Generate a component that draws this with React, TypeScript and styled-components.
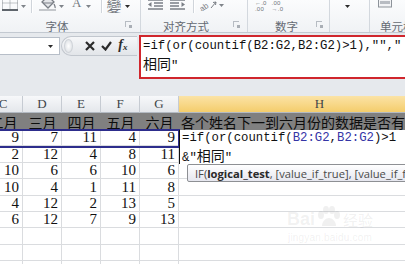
import React from 'react';
import styled, { createGlobalStyle } from 'styled-components';

const GlobalStyle = createGlobalStyle`
  html, body {
    margin: 0;
    padding: 0;
    background: #fff;
  }
  body {
    width: 405px;
    height: 264px;
    overflow: hidden;
  }
`;

const Screen = styled.div`
  position: relative;
  width: 405px;
  height: 264px;
  overflow: hidden;
  display: flex;
  flex-direction: column;
  background: #fff;
  font-family: "Noto Sans CJK SC", sans-serif;
`;

/* ---------- ribbon ---------- */

const Ribbon = styled.div`
  height: 33px;
  flex-shrink: 0;
  display: flex;
  background: linear-gradient(#fbfcfd, #f0f2f5);
  border-bottom: 1px solid #c3c9d1;
  box-sizing: border-box;
`;

const Group = styled.div<{ $w?: number }>`
  position: relative;
  width: ${p => (p.$w ? `${p.$w}px` : 'auto')};
  flex: ${p => (p.$w ? '0 0 auto' : '1')};
  display: flex;
  flex-direction: column;
  border-right: ${p => (p.$w ? '1px solid #d3d8de' : 'none')};
  box-sizing: border-box;
  overflow: hidden;
`;

const Tools = styled.div`
  height: 13px;
  display: flex;
  align-items: flex-end;
  overflow: hidden;
`;

const Tool = styled.span<{ $ml: number; $mb?: number }>`
  display: flex;
  align-items: flex-end;
  flex-shrink: 0;
  margin-left: ${p => p.$ml}px;
  margin-bottom: ${p => p.$mb ?? 0}px;
`;

const ToolSep = styled.span<{ $ml: number }>`
  width: 1px;
  height: 13px;
  flex-shrink: 0;
  margin-left: ${p => p.$ml}px;
  background: #d0d5db;
  box-shadow: 1px 0 0 #fff;
`;

const GlyphIcon = styled.span<{ $size: number; $serif?: boolean }>`
  display: block;
  font-family: ${p => (p.$serif ? '"Liberation Serif", serif' : '"Noto Sans CJK TC", "Noto Sans CJK SC", sans-serif')};
  font-size: ${p => p.$size}px;
  line-height: ${p => p.$size}px;
  color: #767b82;
`;

const TinyStack = styled.span`
  display: flex;
  flex-direction: column;
  font-family: "Liberation Sans", sans-serif;
  font-size: 6px;
  line-height: 6px;
  color: #6f747b;
  letter-spacing: 0.2px;
`;

const GroupLabel = styled.div<{ $shift?: number; $left?: boolean }>`
  height: 19px;
  display: flex;
  align-items: center;
  justify-content: ${p => (p.$left ? 'flex-start' : 'center')};
  padding-top: 7px;
  padding-left: ${p => (p.$left ? 10 : 0)}px;
  box-sizing: border-box;
  transform: translateX(${p => p.$shift ?? 0}px);
  font-size: 11.5px;
  line-height: 12px;
  color: #646a73;
  white-space: nowrap;
`;

const Launcher = styled.span<{ $right: number }>`
  position: absolute;
  right: ${p => p.$right}px;
  bottom: 5px;
  width: 6px;
  height: 6px;
  border-top: 1px solid #b7bcc3;
  border-left: 1px solid #b7bcc3;
  box-sizing: border-box;

  &::after {
    content: '';
    position: absolute;
    right: -1px;
    bottom: -1px;
    width: 3px;
    height: 3px;
    background: #a9aeb5;
  }
`;

const Caret = ({ dark }: { dark?: boolean }) => (
  <svg width="5" height="3" viewBox="0 0 5 3">
    <path d="M0 0h5L2.5 3z" fill={dark ? '#2b2b2b' : '#7f848a'} />
  </svg>
);

const BordersIcon = () => (
  <svg width="16" height="16" viewBox="0 0 16 16">
    <g stroke="#868c93" strokeWidth="1" strokeDasharray="1 1" fill="none">
      <path d="M0.5 0.5V15.5M15.5 0.5V15.5M8 0.5V15.5M0.5 8H15.5" />
    </g>
    <path d="M0 15h16" stroke="#5f656c" strokeWidth="2" />
  </svg>
);

const BucketIcon = () => (
  <svg width="17" height="16" viewBox="0 0 17 16">
    <path d="M3 7l6-6 6 6-6 6z" fill="#e4e6e9" stroke="#7a7f86" strokeWidth="1.3" />
    <path d="M4 8h10" stroke="#7a7f86" strokeWidth="1" />
    <path d="M15 9c1 2 1.5 3 1 4" stroke="#7a7f86" strokeWidth="1.3" fill="none" />
    <rect x="0" y="14" width="17" height="2" fill="#c4c7cb" />
  </svg>
);

const IndentIcon = ({ flip }: { flip?: boolean }) => (
  <svg width="15" height="11" viewBox="0 0 15 11" style={flip ? { transform: 'scaleX(-1)' } : undefined}>
    <g stroke="#7a7f86" strokeWidth="1.3">
      <path d="M0 1h15M6 4h9M6 7h9M0 10h15" />
    </g>
    <path d="M0 5.5l3.5-2.5v5z" fill="#7a7f86" />
  </svg>
);

const OrientIcon = () => (
  <svg width="18" height="12" viewBox="0 0 18 12">
    <text x="0" y="11" fontSize="8" fill="#7a7f86" fontFamily="Liberation Sans, sans-serif" transform="rotate(-35 4 9)">ab</text>
    <path d="M11 9l5-6M16 3l-3 0.5M16 3l-0.5 3" stroke="#7a7f86" strokeWidth="1" fill="none" />
  </svg>
);

const CellsIcon = () => (
  <svg width="18" height="10" viewBox="0 0 18 10">
    <rect x="0.5" y="0" width="13" height="8" fill="#f3f4f6" stroke="#8d939a" />
    <rect x="2" y="2" width="10" height="3" fill="#b8bcc2" />
  </svg>
);

/* ---------- formula bar ---------- */

const FormulaArea = styled.div`
  height: 63px;
  flex-shrink: 0;
  display: flex;
  align-items: flex-start;
  padding-top: 2px;
  box-sizing: border-box;
  background: #e6e9ed;
`;

const NameBox = styled.div`
  width: 63px;
  height: 18px;
  margin-top: 2px;
  margin-left: -1px;
  display: flex;
  align-items: center;
  justify-content: flex-end;
  padding-right: 6px;
  box-sizing: border-box;
  background: #fff;
  border: 1px solid #b7bec8;
`;

const Pill = styled.div`
  width: 78px;
  height: 20px;
  margin-top: 1px;
  margin-left: 1px;
  display: flex;
  align-items: center;
  box-sizing: border-box;
  border: 1px solid #c2c7ce;
  border-right: none;
  border-radius: 10px 0 0 10px;
  background: linear-gradient(#f6f7f9, #e2e5e9);
`;

const Grip = styled.span`
  width: 7px;
  height: 12px;
  margin-left: 2px;
  border-radius: 50%;
  background: radial-gradient(#ffffff, #d6dadf);
  border: 1px solid #cfd3d8;
`;

const PillBtn = styled.span<{ $ml: number }>`
  display: flex;
  align-items: center;
  margin-left: ${p => p.$ml}px;
`;

const FxLabel = styled.span`
  font-family: "Liberation Serif", serif;
  font-style: italic;
  font-weight: bold;
  font-size: 14px;
  line-height: 14px;
  color: #2c2c2c;

  & sub {
    font-size: 9px;
    vertical-align: -1px;
  }
`;

const FormulaBox = styled.div`
  width: 266px;
  height: 44px;
  margin-left: 2px;
  flex-shrink: 0;
  padding: 1px 0 0 2px;
  box-sizing: border-box;
  background: #fff;
  border: 2px solid #d0262d;
  border-right: none;
  overflow: hidden;
`;

const CodeLine = styled.div`
  height: 17px;
  line-height: 17px;
  white-space: nowrap;
  font-family: "Liberation Mono", "Noto Sans CJK SC", monospace;
  font-size: 12.3px;
  color: #111;
`;

const Cjk = styled.span`
  font-family: "Noto Sans CJK SC", sans-serif;
  font-size: 14px;
`;

const Ref = styled.span`
  color: #3535a6;
`;

/* ---------- sheet ---------- */

const Sheet = styled.div`
  position: relative;
  flex: 1;
  overflow: hidden;
  background: #fff;
`;

const Row = styled.div<{ $h: number }>`
  display: flex;
  height: ${p => p.$h}px;
  margin-left: -16px;
`;

const HeadCell = styled.div<{ $w: number; $active?: boolean }>`
  width: ${p => p.$w}px;
  flex-shrink: 0;
  display: flex;
  align-items: center;
  justify-content: center;
  box-sizing: border-box;
  border-right: 1px solid #c6cbd2;
  border-bottom: 1px solid #b3bac3;
  background: ${p => (p.$active ? 'linear-gradient(#fbe3a6, #f4cd6c)' : 'linear-gradient(#f7f8fa, #e4e7eb)')};
  font-family: "Liberation Serif", serif;
  font-size: 13px;
  color: #404448;
`;

const TitleCell = styled.div<{ $w: number; $left?: boolean }>`
  width: ${p => p.$w}px;
  flex-shrink: 0;
  display: flex;
  align-items: center;
  justify-content: ${p => (p.$left ? 'flex-start' : 'center')};
  padding-left: ${p => (p.$left ? 2 : 0)}px;
  box-sizing: border-box;
  background: #808080;
  font-size: 14px;
  line-height: 16px;
  color: #0d0d0d;
  white-space: nowrap;
  overflow: hidden;
`;

const Cell = styled.div<{ $w: number }>`
  width: ${p => p.$w}px;
  flex-shrink: 0;
  display: flex;
  align-items: flex-end;
  justify-content: flex-end;
  padding: 0 3px 0 0;
  box-sizing: border-box;
  border-right: 1px solid #dadcdf;
  border-bottom: 1px solid #dadcdf;
  font-family: "Liberation Serif", serif;
  font-size: 15px;
  line-height: 15px;
  color: #111;
`;

const RangeBox = styled.div`
  position: absolute;
  left: -3px;
  top: 33px;
  width: 183px;
  height: 19px;
  box-sizing: border-box;
  border: 2px solid #2d2d8c;
`;

const Editor = styled.div`
  position: absolute;
  left: 179px;
  top: 34px;
  width: 230px;
  height: 34px;
  padding-left: 2px;
  box-sizing: border-box;
  background: #fff;
  border-left: 1px solid #111;
`;

const Tooltip = styled.div`
  position: absolute;
  left: 187px;
  top: 68px;
  height: 18px;
  padding: 0 6px 0 7px;
  display: flex;
  align-items: center;
  box-sizing: border-box;
  border: 1px solid #8e9094;
  border-radius: 2px;
  background: linear-gradient(#ffffff, #e6e7ef);
  font-family: "Open Sans", sans-serif;
  font-size: 11.2px;
  color: #4a4a4a;
  white-space: nowrap;

  & b {
    color: #2a2a2a;
  }
`;

const Watermark = styled.div`
  position: absolute;
  left: 287px;
  top: 110px;
  display: flex;
  flex-direction: column;
  align-items: center;
  color: rgba(120, 120, 120, 0.11);
  pointer-events: none;
`;

const MarkTop = styled.div`
  display: flex;
  align-items: flex-end;
  font-family: "Liberation Sans", sans-serif;
  font-weight: bold;
  font-size: 18px;
  line-height: 18px;
`;

const MarkCjk = styled.span`
  font-family: "Noto Sans CJK SC", sans-serif;
  font-weight: normal;
  font-size: 15px;
  line-height: 16px;
  margin-left: 2px;
`;

const MarkUrl = styled.div`
  margin-top: 4px;
  font-family: "Liberation Sans", sans-serif;
  font-size: 10px;
  letter-spacing: 0.2px;
`;

const colW = [39, 39, 39, 39, 39, 282];
const letters = ['C', 'D', 'E', 'F', 'G', 'H'];
const months = ['二月', '三月', '四月', '五月', '六月'];
const data = [
  [9, 7, 11, 4, 9],
  [2, 12, 4, 8, 11],
  [10, 6, 6, 10, 6],
  [10, 4, 1, 11, 8],
  [4, 12, 2, 13, 5],
  [6, 12, 7, 9, 13],
  [null, null, null, null, null],
  [null, null, null, null, null],
  [null, null, null, null, null],
];

function App() {
  return (
    <Screen>
      <GlobalStyle />
      <Ribbon>
        <Group $w={141}>
          <Tools>
            <Tool $ml={2} $mb={2}><BordersIcon /></Tool>
            <Tool $ml={3} $mb={5}><Caret /></Tool>
            <ToolSep $ml={5} />
            <Tool $ml={7} $mb={2}><BucketIcon /></Tool>
            <Tool $ml={3} $mb={5}><Caret /></Tool>
            <Tool $ml={8} $mb={4}><GlyphIcon $size={13} $serif>A</GlyphIcon></Tool>
            <Tool $ml={5} $mb={5}><Caret /></Tool>
            <ToolSep $ml={10} />
            <Tool $ml={4} $mb={0}><GlyphIcon $size={15}>變</GlyphIcon></Tool>
            <Tool $ml={4} $mb={5}><Caret dark /></Tool>
          </Tools>
          <GroupLabel $shift={-13}>字体</GroupLabel>
          <Launcher $right={9} />
        </Group>
        <Group $w={107}>
          <Tools>
            <Tool $ml={7} $mb={3}><IndentIcon /></Tool>
            <Tool $ml={7} $mb={3}><IndentIcon flip /></Tool>
            <ToolSep $ml={8} />
            <Tool $ml={6} $mb={2}><OrientIcon /></Tool>
            <Tool $ml={1} $mb={6}><Caret /></Tool>
          </Tools>
          <GroupLabel $shift={-8}>对齐方式</GroupLabel>
          <Launcher $right={8} />
        </Group>
        <Group $w={82}>
          <Tools>
            <Tool $ml={7} $mb={1}>
              <TinyStack><span>←.0</span><span>.00</span></TinyStack>
            </Tool>
            <Tool $ml={5} $mb={1}>
              <TinyStack><span>.00</span><span>→.0</span></TinyStack>
            </Tool>
          </Tools>
          <GroupLabel $shift={-2}>数字</GroupLabel>
          <Launcher $right={7} />
        </Group>
        <Group $w={40}>
          <Tools>
            <Tool $ml={15} $mb={5}><Caret dark /></Tool>
          </Tools>
        </Group>
        <Group>
          <Tools>
            <Tool $ml={8} $mb={4}><CellsIcon /></Tool>
          </Tools>
          <GroupLabel $left>单元格</GroupLabel>
        </Group>
      </Ribbon>

      <FormulaArea>
        <NameBox><Caret dark /></NameBox>
        <Pill>
          <Grip />
          <PillBtn $ml={12}>
            <svg width="10" height="10" viewBox="0 0 10 10">
              <path d="M1 1l8 8M9 1l-8 8" stroke="#2a2a2a" strokeWidth="2.2" />
            </svg>
          </PillBtn>
          <PillBtn $ml={6}>
            <svg width="11" height="10" viewBox="0 0 11 10">
              <path d="M1 5l3.5 3.5L10 1" stroke="#2a2a2a" strokeWidth="2.2" fill="none" />
            </svg>
          </PillBtn>
          <PillBtn $ml={6}>
            <FxLabel>f<sub>x</sub></FxLabel>
          </PillBtn>
        </Pill>
        <FormulaBox>
          <CodeLine>=if(or(countif(B2:G2,B2:G2)&gt;1),"","</CodeLine>
          <CodeLine><Cjk>相同</Cjk>"</CodeLine>
        </FormulaBox>
      </FormulaArea>

      <Sheet>
        <Row $h={17}>
          {letters.map((l, i) => (
            <HeadCell key={l} $w={colW[i]} $active={l === 'H'}>{l}</HeadCell>
          ))}
        </Row>
        <Row $h={17}>
          {months.map((m, i) => (
            <TitleCell key={m} $w={colW[i]}>{m}</TitleCell>
          ))}
          <TitleCell $w={colW[5]} $left>各个姓名下一到六月份的数据是否有相同</TitleCell>
        </Row>
        {data.map((r, ri) => (
          <Row key={ri} $h={16.4}>
            {r.map((v, ci) => (
              <Cell key={ci} $w={colW[ci]}>{v ?? ''}</Cell>
            ))}
            <Cell $w={colW[5]} />
          </Row>
        ))}

        <RangeBox />
        <Editor>
          <CodeLine>=if(or(countif(<Ref>B2:G2</Ref>,<Ref>B2:G2</Ref>)&gt;1</CodeLine>
          <CodeLine>&amp;"<Cjk>相同</Cjk>"</CodeLine>
        </Editor>
        <Tooltip>
          IF(<b>logical_test</b>, [value_if_true], [value_if_false])
        </Tooltip>
        <Watermark>
          <MarkTop>
            Bai
            <svg width="26" height="22" viewBox="0 0 26 22">
              <g fill="currentColor">
                <ellipse cx="6" cy="9" rx="3" ry="4" />
                <ellipse cx="11" cy="4" rx="3" ry="4" />
                <ellipse cx="17" cy="4" rx="3" ry="4" />
                <ellipse cx="22" cy="9" rx="3" ry="4" />
                <path d="M7 20c0-5 4-8 7-8s7 3 7 8z" />
              </g>
            </svg>
            <MarkCjk>经验</MarkCjk>
          </MarkTop>
          <MarkUrl>jingyan.baidu.com</MarkUrl>
        </Watermark>
      </Sheet>
    </Screen>
  );
}

export default App;
